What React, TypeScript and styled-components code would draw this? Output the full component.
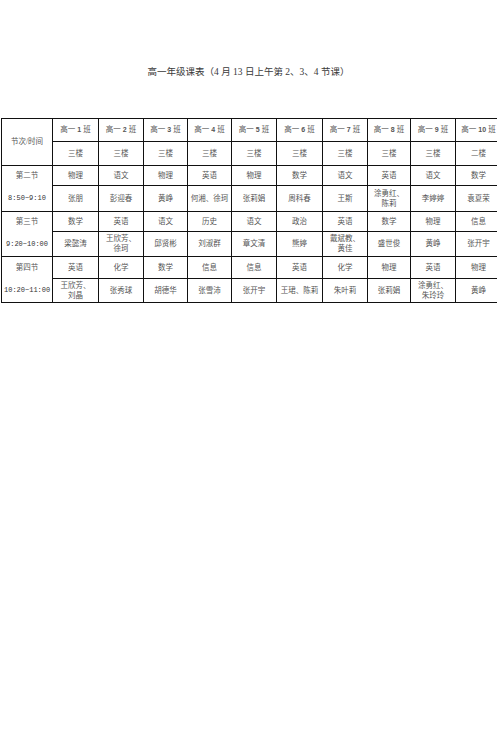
import styled, { createGlobalStyle } from 'styled-components';

const GlobalStyle = createGlobalStyle`
	html, body {
		margin: 0;
		padding: 0;
		background: #fff;
		overflow: hidden;
	}
	body {
		font-family: 'Liberation Serif', 'Noto Sans CJK SC', serif;
	}
`;

const Page = styled.div`
	width: 497px;
	height: 750px;
	overflow: hidden;
	padding-top: 67px;
	box-sizing: border-box;
`;

const Title = styled.h1`
	margin: 0 0 40px;
	height: 11px;
	line-height: 11px;
	text-align: center;
	font-size: 9.5px;
	font-weight: normal;
	color: #3a3a3a;
	font-family: 'Liberation Serif', 'Noto Sans CJK SC', serif;
`;

const Sheet = styled.table`
	margin-left: 1px;
	width: 500px;
	table-layout: fixed;
	border-collapse: collapse;
	font-size: 7.5px;
	color: #555;
`;

const Row = styled.tr<{ $h: number }>`
	height: ${(p) => p.$h}px;
`;

const Cell = styled.td<{ $noTop?: boolean; $noBottom?: boolean; $mono?: boolean }>`
	border: 1px solid #111;
	padding: 0 2px;
	text-align: center;
	vertical-align: middle;
	line-height: 10px;
	white-space: nowrap;
	overflow: hidden;
	font-family: ${(p) =>
		p.$mono
			? "'Liberation Mono', 'DejaVu Sans Mono', monospace"
			: "'Liberation Serif', 'Noto Sans CJK SC', serif"};
	font-size: ${(p) => (p.$mono ? '7px' : '7.5px')};
	color: ${(p) => (p.$mono ? '#333' : '#555')};
	border-top-style: ${(p) => (p.$noTop ? 'hidden' : 'solid')};
	border-bottom-style: ${(p) => (p.$noBottom ? 'hidden' : 'solid')};
`;

const ClassNo = styled.span`
	font-family: 'Liberation Sans', sans-serif;
	font-weight: bold;
	font-size: 7px;
	margin: 0 2px;
`;

const widths = [51, 46, 45, 44, 44, 45, 46, 45, 43, 45, 46];

const floors = ['三楼', '三楼', '三楼', '三楼', '三楼', '三楼', '三楼', '三楼', '三楼', '二楼'];

const periods = [
	{
		name: '第二节',
		time: '8:50~9:10',
		subjects: ['物理', '语文', '物理', '英语', '物理', '数学', '语文', '英语', '语文', '数学'],
		teachers: ['张朋', '彭迎春', '黄峥', '何湘、徐珂', '张莉娟', '周科春', '王斯', '涂勇红、\n陈莉', '李婷婷', '袁夏荣'],
		h: [20, 26]
	},
	{
		name: '第三节',
		time: '9:20~10:00',
		subjects: ['数学', '英语', '语文', '历史', '语文', '政治', '英语', '数学', '物理', '信息'],
		teachers: ['梁懿涛', '王欣芳、\n徐珂', '邱贤彬', '刘淑群', '章文清', '熊婷', '戴斌教、\n黄佳', '盛世俊', '黄峥', '张开宇'],
		h: [20, 25]
	},
	{
		name: '第四节',
		time: '10:20~11:00',
		subjects: ['英语', '化学', '数学', '信息', '信息', '英语', '化学', '物理', '英语', '物理'],
		teachers: ['王欣芳、\n刘晶', '张秀球', '胡德华', '张雪沛', '张开宇', '王珺、陈莉', '朱叶莉', '张莉娟', '涂勇红、\n朱玲玲', '黄峥'],
		h: [22, 24]
	}
];

function Lines({ text }: { text: string }) {
	const parts = text.split('\n');
	return (
		<>
			{parts.map((t, i) => (
				<div key={i}>{t}</div>
			))}
		</>
	);
}

export default function App() {
	return (
		<Page>
			<GlobalStyle />
			<Title>高一年级课表（4 月 13 日上午第 2、3、4 节课）</Title>
			<Sheet>
				<colgroup>
					{widths.map((w, i) => (
						<col key={i} style={{ width: w }} />
					))}
				</colgroup>
				<tbody>
					<Row $h={23}>
						<Cell rowSpan={2}>节次/时间</Cell>
						{floors.map((_, i) => (
							<Cell key={i}>
								高一<ClassNo>{i + 1}</ClassNo>班
							</Cell>
						))}
					</Row>
					<Row $h={24}>
						{floors.map((f, i) => (
							<Cell key={i}>{f}</Cell>
						))}
					</Row>
					{periods.map((p) => [
						<Row $h={p.h[0]} key={p.name + 'a'}>
							<Cell $noBottom>{p.name}</Cell>
							{p.subjects.map((s, i) => (
								<Cell key={i}>{s}</Cell>
							))}
						</Row>,
						<Row $h={p.h[1]} key={p.name + 'b'}>
							<Cell $noTop $mono>
								{p.time}
							</Cell>
							{p.teachers.map((t, i) => (
								<Cell key={i}>
									<Lines text={t} />
								</Cell>
							))}
						</Row>
					])}
				</tbody>
			</Sheet>
		</Page>
	);
}
